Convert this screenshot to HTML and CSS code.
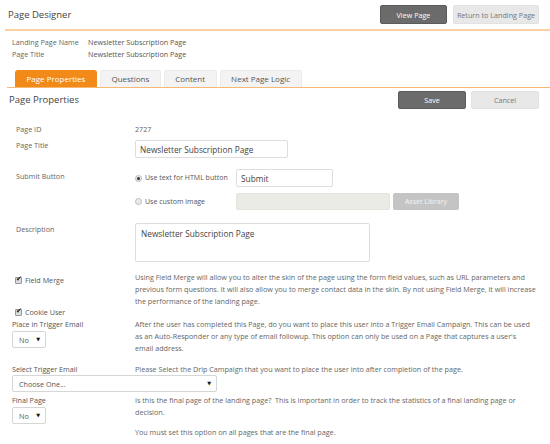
FILE: index.html
```html
<!DOCTYPE html>
<html>
<head>
    <meta charset="UTF-8">
    <title>Page Designer</title>
    <link rel="stylesheet" href="styles.css">
</head>
<body>
    <header class="top-bar">
        <h1 class="page-title">Page Designer</h1>
        <div class="top-actions">
            <button class="btn btn-dark">View Page</button>
            <button class="btn btn-light btn-wide">Return to Landing Page</button>
        </div>
    </header>

    <dl class="summary">
        <dt>Landing Page Name</dt>
        <dd>Newsletter Subscription Page</dd>
        <dt>Page Title</dt>
        <dd>Newsletter Subscription Page</dd>
    </dl>

    <nav class="tabs">
        <a class="tab active">Page Properties</a>
        <a class="tab">Questions</a>
        <a class="tab">Content</a>
        <a class="tab">Next Page Logic</a>
    </nav>

    <div class="section-head">
        <h2 class="section-title">Page Properties</h2>
        <div class="section-actions">
            <button class="btn btn-dark btn-save">Save</button>
            <button class="btn btn-light btn-save">Cancel</button>
        </div>
    </div>

    <!-- basic page fields -->
    <div class="row row-id">
        <div class="label">Page ID</div>
        <div class="value">2727</div>
    </div>
    <div class="row row-title">
        <div class="label">Page Title</div>
        <div class="value"><input class="text-input title-input" type="text" value="Newsletter Subscription Page"></div>
    </div>
    <div class="row row-submit">
        <div class="label">Submit Button</div>
        <div class="value">
            <div class="option">
                <span class="radio on"></span>
                <span class="option-text">Use text for HTML button</span>
                <input class="text-input submit-input" type="text" value="Submit">
            </div>
            <div class="option option-image">
                <span class="radio"></span>
                <span class="option-text">Use custom image</span>
                <input class="text-input image-input" type="text" disabled>
                <button class="btn btn-asset">Asset Library</button>
            </div>
        </div>
    </div>
    <div class="row row-desc">
        <div class="label">Description</div>
        <div class="value"><textarea class="text-input desc-input">Newsletter Subscription Page</textarea></div>
    </div>

    <!-- options with help text -->
    <div class="opt-row row-merge">
        <div class="opt-label"><span class="check"></span>Field Merge</div>
        <p class="help">Using Field Merge will allow you to alter the skin of the page using the form field values, such as URL parameters and previous form questions. It will also allow you to merge contact data in the skin. By not using Field Merge, it will increase the performance of the landing page.</p>
    </div>
    <div class="opt-row row-cookie">
        <div class="opt-label"><span class="check"></span>Cookie User</div>
    </div>
    <div class="opt-row row-trigger">
        <div>
            <div class="opt-label">Place in Trigger Email</div>
            <span class="select small"><select><option>No</option></select></span>
        </div>
        <p class="help">After the user has completed this Page, do you want to place this user into a Trigger Email Campaign. This can be used as an Auto-Responder or any type of email followup. This option can only be used on a Page that captures a user's email address.</p>
    </div>
    <div class="opt-row row-drip">
        <div class="opt-label">Select Trigger Email</div>
        <p class="help">Please Select the Drip Campaign that you want to place the user into after completion of the page.</p>
    </div>
    <div class="wide-select">
        <span class="select large"><select><option>Choose One...</option></select></span>
    </div>
    <div class="opt-row row-final">
        <div>
            <div class="opt-label">Final Page</div>
            <span class="select small"><select><option>No</option></select></span>
        </div>
        <div>
            <p class="help">Is this the final page of the landing page?&nbsp; This is important in order to track the statistics of a final landing page or decision.</p>
            <p class="help help-note">You must set this option on all pages that are the final page.</p>
        </div>
    </div>
</body>
</html>
```

FILE: styles.css
```css
body {
    margin: 0;
    font-family: "Open Sans", "DejaVu Sans", sans-serif;
    font-size: 7.2px;
    color: #555;
    background: #fff;
}

/* top bar */
.top-bar {
    display: flex;
    justify-content: space-between;
    align-items: center;
    height: 29px;
    margin-left: 5px;
    padding: 0 11px 0 3px;
    border-bottom: 2px solid #fbd0a0;
}

.page-title {
    margin: 0;
    font-size: 9.5px;
    font-weight: normal;
    color: #444;
}

.top-actions,
.section-actions {
    display: flex;
    gap: 6px;
}

.btn {
    font-family: inherit;
    font-size: 7.2px;
    height: 19px;
    padding: 0;
    border: 1px solid transparent;
    border-radius: 2px;
    cursor: pointer;
}

.btn-dark {
    width: 67px;
    background: #6b6b6b;
    border-color: #5b5b5b;
    color: #fff;
}

.btn-light {
    width: 68px;
    background: #e8e8e8;
    border-color: #e2e2e2;
    color: #777;
}

.btn-wide {
    width: 86px;
}

/* landing page info */
.summary {
    display: grid;
    grid-template-columns: 76px auto;
    margin: 5px 0 0 12px;
    line-height: 12px;
}

.summary dt {
    color: #666;
}

.summary dd {
    margin: 0;
    color: #555;
}

/* tabs */
.tabs {
    display: flex;
    gap: 3px;
    margin: 10px 0 0 7px;
    padding-left: 8px;
    border-bottom: 1px solid #f6b873;
}

.tab {
    height: 16px;
    line-height: 16px;
    padding: 0 10.5px;
    font-size: 8px;
    color: #555;
    background: #f3f3f3;
    border: 1px solid #ebebeb;
    border-bottom: 0;
    border-radius: 3px 3px 0 0;
    cursor: pointer;
}

.tab.active {
    background: #f28a1a;
    border-color: #f28a1a;
    color: #fff;
}

/* section title + save/cancel */
.section-head {
    display: flex;
    justify-content: space-between;
    align-items: center;
    padding: 3px 11px 0 9px;
}

.section-title {
    margin: 0 0 1px;
    font-size: 9.5px;
    font-weight: normal;
    color: #444;
}

.section-actions {
    gap: 5px;
}

.btn-save {
    width: 68px;
    height: 18px;
}

/* field rows */
.row {
    display: grid;
    grid-template-columns: 119px 1fr;
    padding-left: 16px;
    line-height: 12px;
}

.label {
    color: #666;
}

.value {
    color: #666;
}

.row-id {
    margin-top: 14px;
}

.row-title {
    margin-top: 4px;
}

.text-input {
    box-sizing: border-box;
    font-family: inherit;
    font-size: 8.3px;
    color: #444;
    border: 1px solid #ddd;
    border-radius: 2px;
    background: #fff;
    outline: none;
}

.title-input {
    width: 153px;
    height: 18px;
    margin-top: 1px;
    padding: 0 4px;
}

.row-submit {
    margin-top: 11px;
}

.row-submit .label {
    padding-top: 1px;
}

.option {
    display: flex;
    align-items: center;
    height: 18px;
}

.option-image {
    margin-top: 6px;
    height: 17px;
}

.radio {
    position: relative;
    box-sizing: border-box;
    width: 7px;
    height: 7px;
    margin-right: 3px;
    border: 1px solid #bbb;
    border-radius: 50%;
    background: #e9e9e9;
}

.radio.on::after {
    content: "";
    position: absolute;
    top: 1px;
    left: 1px;
    width: 3px;
    height: 3px;
    border-radius: 50%;
    background: #333;
}

.option-text {
    width: 91px;
    font-size: 7px;
    color: #555;
}

.submit-input {
    width: 97px;
    height: 18px;
    padding: 0 4px;
}

.image-input {
    width: 154px;
    height: 17px;
    background: #ebebe6;
    border-color: #e4e4e0;
}

.btn-asset {
    width: 66px;
    height: 17px;
    margin-left: 3px;
    background: #c4c4c4;
    color: #f4f4f4;
    font-size: 7px;
}

.row-desc {
    margin-top: 13px;
}

.desc-input {
    display: block;
    width: 235px;
    height: 39px;
    padding: 5px 5px;
    line-height: 10px;
    resize: none;
}

/* options with help text */
.opt-row {
    display: grid;
    grid-template-columns: 123px 1fr;
    padding: 0 14px 0 12px;
    line-height: 12px;
}

.opt-label {
    display: flex;
    align-items: center;
    color: #555;
}

.check {
    position: relative;
    box-sizing: border-box;
    width: 7px;
    height: 7px;
    margin: 0 3px 0 3px;
    border: 1px solid #999;
    border-radius: 1px;
    background: #ddd;
}

.check::after {
    content: "\2714";
    position: absolute;
    top: -4px;
    left: 0;
    font-size: 7px;
    line-height: 10px;
    color: #111;
}

.help {
    margin: 0;
    color: #666;
}

.row-merge {
    margin-top: 9px;
}

.row-merge .opt-label {
    align-self: start;
    padding-top: 3px;
}

.row-cookie {
    margin-top: -1px;
}

.select {
    position: relative;
    display: inline-block;
}

.select select {
    display: block;
    box-sizing: border-box;
    height: 17px;
    padding: 0 6px;
    font-family: inherit;
    font-size: 7.2px;
    color: #555;
    background: #fff;
    border: 1px solid #d6d6d6;
    border-radius: 2px;
    appearance: none;
    outline: none;
}

.select::after {
    content: "\25BC";
    position: absolute;
    top: 5px;
    right: 6px;
    font-size: 5px;
    line-height: 6px;
    color: #111;
    pointer-events: none;
}

.select.small select {
    width: 34px;
}

.select.large select {
    width: 205px;
}

.row-trigger .select {
    margin-top: 1px;
}

.row-drip {
    margin-top: 9px;
}

.wide-select {
    padding-left: 12px;
}

.row-final {
    margin-top: 2px;
}

.row-final .select {
    margin-top: 1px;
}

.help-note {
    margin-top: 8px;
}
```
